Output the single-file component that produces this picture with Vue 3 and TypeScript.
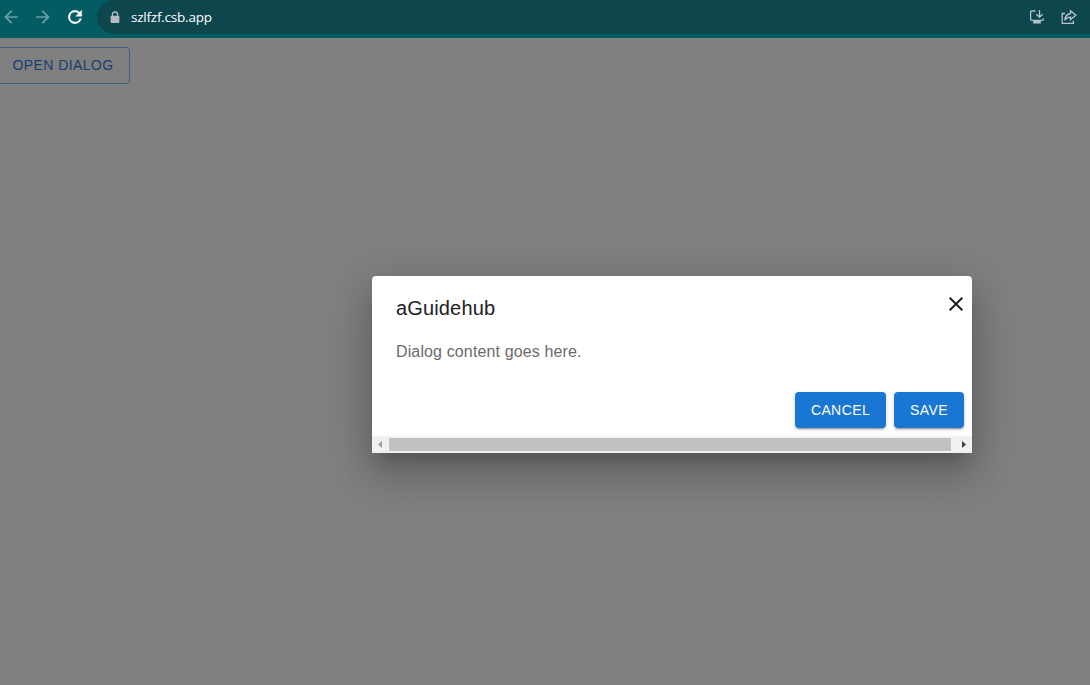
<script setup lang="ts">
interface Action {
  id: string
  label: string
}

const host: string = 'szlfzf.csb.app'
const actions: Action[] = [
  { id: 'cancel', label: 'CANCEL' },
  { id: 'save', label: 'SAVE' },
]
</script>

<template>
  <div class="window">
    <header class="toolbar">
      <nav class="nav">
        <svg class="nav-icon dim" viewBox="0 0 24 24"><path d="M20 11H7.83l5.590-5.590L12 4l-8 8 8 8 1.410-1.410L7.830 13H20z" /></svg>
        <svg class="nav-icon dim" viewBox="0 0 24 24"><path d="M12 4l-1.410 1.410L16.170 11H4v2h12.170l-5.580 5.590L12 20l8-8z" /></svg>
        <svg class="nav-icon" viewBox="0 0 24 24"><path d="M17.650 6.350A7.960 7.960 0 0 0 12 4a8 8 0 1 0 7.730 10h-2.080A6 6 0 1 1 12 6c1.660 0 3.140.69 4.220 1.780L13 11h7V4z" /></svg>
      </nav>
      <div class="address">
        <svg class="lock" viewBox="0 0 10 13"><path d="M2.400 5V3.600a2.600 2.600 0 0 1 5.200 0V5" fill="none" stroke="#b5b9c0" stroke-width="1.300" /><rect x="0.600" y="4.700" width="8.800" height="7.400" rx="1" fill="#b5b9c0" /></svg>
        <span class="host">{{ host }}</span>
        <svg class="tool install" viewBox="0 0 16 16"><path d="M6.500 2H2.600q-1 0-1 1v7.300q0 1 1 1h10.800q1 0 1-1V9.200M10.500 1v7M7.400 5.200l3.100 3.100 3.100-3.100" /><path d="M4.200 11.500h7.600v3H4.200z" fill="#b5c4cb" stroke="none" /></svg>
        <svg class="tool" viewBox="0 0 16 16"><path d="M4 4.500H1.200v9.900h11.200v-2.600M9.500 1.800l5.400 4.400-5.400 4.400V8.200C6.800 8.200 5 9 3.700 11.200 4.100 7.300 6.300 5 9.500 4.500z" /></svg>
      </div>
    </header>

    <main class="page">
      <button class="open" type="button">OPEN DIALOG</button>
      <section class="dialog" role="dialog">
        <div class="head">
          <h2>aGuidehub</h2>
          <svg class="close" viewBox="0 0 24 24"><path d="M19 6.410L17.590 5 12 10.590 6.410 5 5 6.410 10.590 12 5 17.590 6.410 19 12 13.410 17.590 19 19 17.590 13.410 12z" /></svg>
        </div>
        <p class="content">Dialog content goes here.</p>
        <div class="actions">
          <button v-for="action in actions" :key="action.id" class="action" type="button">{{ action.label }}</button>
        </div>
        <div class="scrollbar">
          <svg class="arrow" viewBox="0 0 17 17"><path d="M10 5v7L6 8.500z" fill="#a0a0a0" /></svg>
          <div class="thumb"></div>
          <svg class="arrow" viewBox="0 0 17 17"><path d="M7 5v7l4-3.500z" fill="#404040" /></svg>
        </div>
      </section>
    </main>
  </div>
</template>

<style>
body {
  margin: 0;
  overflow: hidden;
}
</style>

<style scoped>
.window {
  width: 1090px;
  height: 685px;
  display: flex;
  flex-direction: column;
  overflow: hidden;
  background: #808080;
  font-family: "Liberation Sans", Arial, sans-serif;
}
.toolbar {
  height: 38px;
  flex: none;
  display: flex;
  align-items: flex-start;
  background: #025c61;
}
.nav {
  width: 97px;
  height: 34px;
  flex: none;
  display: flex;
  align-items: center;
  gap: 12px;
  box-sizing: border-box;
  padding-left: 1px;
}
.nav-icon {
  width: 20px;
  height: 20px;
  flex: none;
  fill: #fff;
  stroke: #fff;
  stroke-width: 0.6;
}
.nav-icon.dim {
  fill: #67a0a5;
  stroke: #67a0a5;
  stroke-width: 0.2;
}
.address {
  flex: 1;
  height: 34px;
  display: flex;
  align-items: center;
  box-sizing: border-box;
  padding: 0 13px;
  border-radius: 17px 0 0 17px;
  background: #0e464e;
}
.lock {
  width: 10px;
  height: 13px;
}
.host {
  margin-left: 11px;
  flex: 1;
  font: 500 13.5px/18px "Open Sans", "Noto Sans", sans-serif;
  letter-spacing: -0.22px;
  color: #fff;
}
.tool {
  width: 16px;
  height: 16px;
  fill: none;
  stroke: #b5c4cb;
  stroke-width: 1.3;
}
.install {
  margin-right: 16px;
}
.page {
  flex: 1;
  display: flex;
  flex-direction: column;
  align-items: flex-start;
  padding-top: 9px;
}
.open {
  width: 134px;
  height: 37px;
  box-sizing: border-box;
  margin-left: -4px;
  padding: 0 0 2px;
  border: 1px solid #405c82;
  border-radius: 4px;
  background: transparent;
  color: #173e70;
  font: 14px/24px "Liberation Sans", Arial, sans-serif;
  letter-spacing: 0.4px;
}
.dialog {
  width: 600px;
  height: 177px;
  margin: 192px 0 0 372px;
  display: flex;
  flex-direction: column;
  border-radius: 4px 4px 0 0;
  background: #fff;
  box-shadow: 0 11px 15px -7px rgba(0, 0, 0, 0.2), 0 24px 38px 3px rgba(0, 0, 0, 0.14), 0 9px 46px 8px rgba(0, 0, 0, 0.12);
}
.head {
  height: 64px;
  display: flex;
  justify-content: space-between;
  box-sizing: border-box;
  padding: 16px 6px 16px 24px;
}
h2 {
  margin: 0;
  font-size: 20px;
  font-weight: 400;
  line-height: 32px;
  letter-spacing: 0.15px;
  color: #212121;
}
.close {
  width: 24px;
  height: 24px;
  margin-right: -2px;
  fill: #212121;
}
.content {
  margin: 0 24px;
  height: 44px;
  font-size: 16px;
  line-height: 24px;
  letter-spacing: 0.13px;
  color: #6b6b6b;
}
.actions {
  height: 52px;
  display: flex;
  justify-content: flex-end;
  gap: 8px;
  box-sizing: border-box;
  padding: 8px;
}
.action {
  height: 36px;
  padding: 0 16px;
  border: 0;
  border-radius: 4px;
  background: #1976d2;
  color: #fff;
  font: 14px/24px "Liberation Sans", Arial, sans-serif;
  letter-spacing: 0.4px;
  box-shadow: 0 3px 1px -2px rgba(0, 0, 0, 0.2), 0 2px 2px rgba(0, 0, 0, 0.14), 0 1px 5px rgba(0, 0, 0, 0.12);
}
.scrollbar {
  height: 17px;
  display: flex;
  align-items: center;
  background: #f1f1f1;
}
.arrow {
  width: 17px;
  height: 17px;
}
.thumb {
  width: 562px;
  height: 13px;
  margin-right: 4px;
  background: #c1c1c1;
}
</style>
